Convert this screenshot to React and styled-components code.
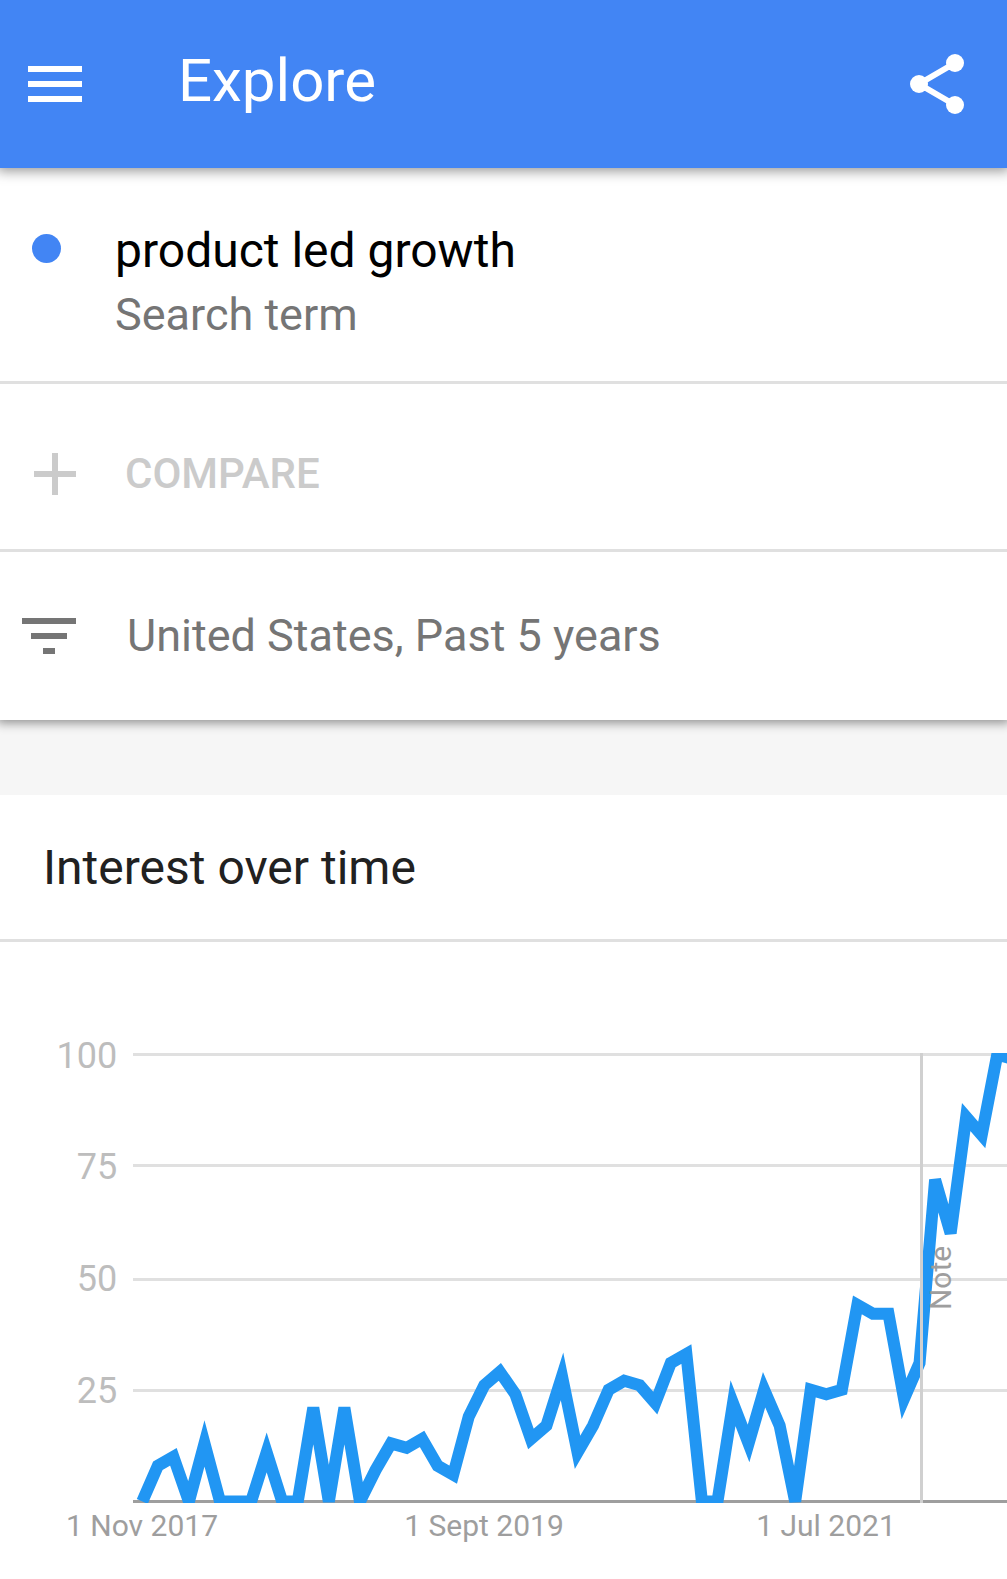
import styled, { createGlobalStyle } from "styled-components";
import { MdMenu, MdAdd, MdFilterList } from "react-icons/md";

const interest = [
  0, 8, 10, 0, 13, 0, 0, 0, 11, 0, 0, 21, 0, 21, 0, 7, 13, 12, 14, 8, 6, 19, 26,
  29, 24, 14, 17, 28, 11, 17, 25, 27, 26, 22, 31, 33, 0, 0, 22, 13, 25, 17, 0,
  25, 24, 25, 44, 42, 42, 23, 31, 72, 60, 86, 82, 100, 99,
];

const yTicks = [
  { value: 100, y: 112.5, labelY: 126 },
  { value: 75, y: 223.5, labelY: 237 },
  { value: 50, y: 337.5, labelY: 349 },
  { value: 25, y: 448.5, labelY: 461 },
];

const xTicks = [
  { index: 0, label: "1 Nov 2017" },
  { index: 22, label: "1 Sept 2019" },
  { index: 44, label: "1 Jul 2021" },
];

const CHART = { left: 133, top: 111, right: 1007, baseline: 559.5 };
const NOTE_X = 921.5;

const xAt = (i) => 142.3 + i * 15.545;
const yAt = (value) => CHART.baseline - value * 4.47;

const ShareIcon = () => (
  <svg width="72" height="72" viewBox="0 0 24 24" fill="currentColor">
    <path
      d="M18 5 6 12l12 7"
      fill="none"
      stroke="currentColor"
      strokeWidth="2"
    />
    <circle cx="18" cy="5" r="3" />
    <circle cx="6" cy="12" r="3" />
    <circle cx="18" cy="19" r="3" />
  </svg>
);

const InterestChart = () => {
  const points = interest.map((v, i) => `${xAt(i)},${yAt(v)}`).join(" ");

  return (
    <Chart viewBox="0 0 1007 637">
      <defs>
        <clipPath id="plot">
          <rect x={CHART.left} y={CHART.top} width="874" height="450" />
        </clipPath>
      </defs>

      {yTicks.map(({ value, y, labelY }) => (
        <g key={value}>
          <GridLine x1={CHART.left} x2={CHART.right} y1={y} y2={y} />
          <YLabel x="117.2" y={labelY}>
            {value}
          </YLabel>
        </g>
      ))}

      <AxisLine
        x1={CHART.left}
        x2={CHART.right}
        y1={CHART.baseline}
        y2={CHART.baseline}
      />
      <TrendLine points={points} clipPath="url(#plot)" />
      <NoteLine x1={NOTE_X} x2={NOTE_X} y1={CHART.top} y2="561" />
      <NoteLabel transform="translate(951 336) rotate(-90)">Note</NoteLabel>

      {xTicks.map(({ index, label }) => (
        <XLabel key={label} x={xAt(index) - 0.3} y="594">
          {label}
        </XLabel>
      ))}
    </Chart>
  );
};

const App = () => {
  return (
    <Page>
      <GlobalStyle />
      <Header>
        <IconButton aria-label="Menu">
          <MdMenu />
        </IconButton>
        <Title>Explore</Title>
        <IconButton aria-label="Share">
          <ShareIcon />
        </IconButton>
      </Header>

      <Filters>
        <TermRow>
          <Dot />
          <div>
            <Term>product led growth</Term>
            <TermType>Search term</TermType>
          </div>
        </TermRow>
        <CompareRow>
          <MdAdd />
          <RowLabel>Compare</RowLabel>
        </CompareRow>
        <FilterRow>
          <MdFilterList />
          <RowLabel>United States, Past 5 years</RowLabel>
        </FilterRow>
      </Filters>

      <Card>
        <CardTitle>Interest over time</CardTitle>
        <InterestChart />
      </Card>
    </Page>
  );
};

export default App;

const GlobalStyle = createGlobalStyle`
  * {
    box-sizing: border-box;
  }

  body {
    margin: 0;
    background: #f6f6f6;
    font-family: Roboto, "Liberation Sans", sans-serif;
  }
`;

const Page = styled.div`
  width: 100%;
  height: 1579px;
  overflow: hidden;
`;

const Header = styled.header`
  position: relative;
  z-index: 2;
  display: flex;
  align-items: center;
  height: 168px;
  padding: 0 34px 0 19px;
  background: #4285f4;
  color: #fff;
  box-shadow: 0 0 12px 3px rgba(0, 0, 0, 0.42);
`;

const IconButton = styled.button`
  display: flex;
  padding: 0;
  border: none;
  background: none;
  color: inherit;
  font-size: 72px;
`;

const Title = styled.h1`
  flex: 1;
  margin: 0 0 0 87px;
  padding-bottom: 7px;
  font-size: 60px;
  font-weight: 400;
  line-height: 72px;
`;

const Filters = styled.section`
  position: relative;
  z-index: 1;
  background: #fff;
  box-shadow: 0 0 10px 3px rgba(0, 0, 0, 0.42);
`;

const Row = styled.div`
  display: flex;
  align-items: center;
  height: 168px;
  border-bottom: 3px solid #e0e0e0;

  svg {
    flex: none;
    font-size: 72px;
  }
`;

const RowLabel = styled.span`
  padding-bottom: 2px;
`;

const TermRow = styled(Row)`
  align-items: flex-start;
  height: 216px;
  padding: 53px 0 0 32px;
`;

const Dot = styled.span`
  width: 29px;
  height: 29px;
  margin: 13px 54px 0 0;
  border-radius: 50%;
  background: #4285f4;
`;

const Term = styled.div`
  color: #000;
  font-size: 48px;
  line-height: 60px;
`;

const TermType = styled.div`
  color: #757575;
  font-size: 45px;
  line-height: 68px;
`;

const CompareRow = styled(Row)`
  gap: 34px;
  padding: 15px 0 0 19px;
  color: #cbcbcb;
  font-size: 42px;
  font-weight: 500;
  text-transform: uppercase;
`;

const FilterRow = styled(Row)`
  gap: 42px;
  padding-left: 13px;
  border-bottom: none;
  color: #757575;
  font-size: 45px;
`;

const Card = styled.section`
  margin-top: 75px;
  background: #fff;
`;

const CardTitle = styled.h2`
  display: flex;
  align-items: center;
  height: 147px;
  margin: 0;
  padding: 1px 0 0 43px;
  border-bottom: 3px solid #e0e0e0;
  color: #212121;
  font-size: 48px;
  font-weight: 400;
`;

const Chart = styled.svg`
  display: block;
  width: 1007px;
  height: 637px;
`;

const GridLine = styled.line`
  stroke: #e0e0e0;
  stroke-width: 3;
`;

const AxisLine = styled(GridLine)`
  stroke: #9e9e9e;
`;

const NoteLine = styled(GridLine)`
  stroke: #d0d0d0;
`;

const TrendLine = styled.polyline`
  fill: none;
  stroke: #2196f3;
  stroke-width: 12;
`;

const YLabel = styled.text`
  fill: #bdbdbd;
  font-size: 36px;
  text-anchor: end;
`;

const XLabel = styled.text`
  fill: #9e9e9e;
  font-size: 30px;
  text-anchor: middle;
`;

const NoteLabel = styled(XLabel)``;
